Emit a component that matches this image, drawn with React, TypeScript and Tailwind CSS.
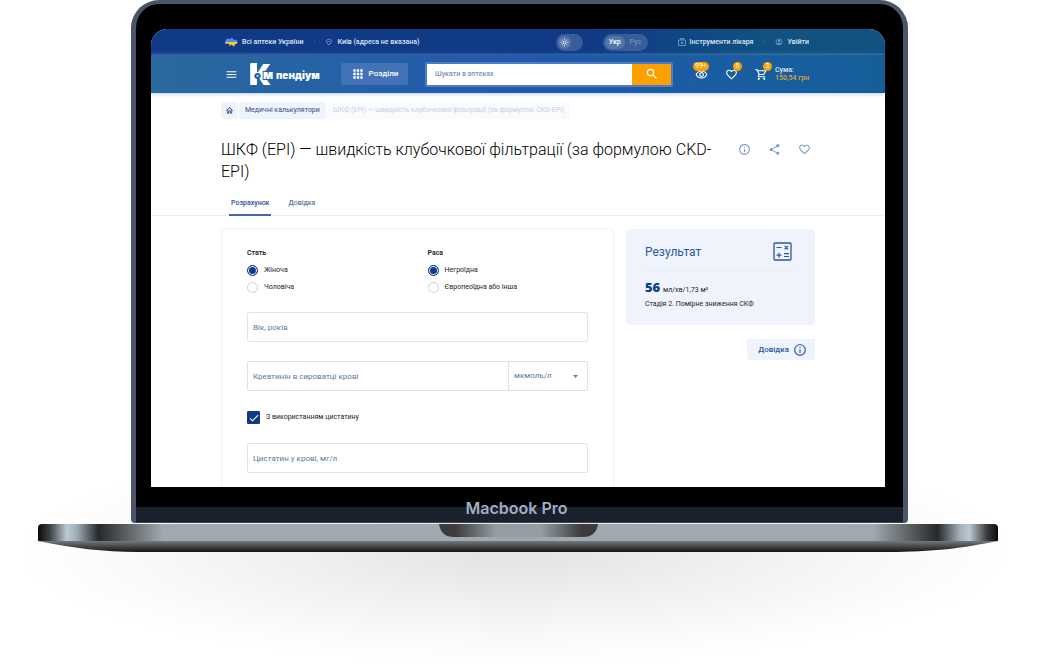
import { useState } from 'react';
import type { ReactNode } from 'react';
import {
  MdApps,
  MdCheck,
  MdFavoriteBorder,
  MdInfoOutline,
  MdMenu,
  MdOutlineAccountCircle,
  MdOutlineHome,
  MdOutlineLightMode,
  MdOutlinePlace,
  MdOutlineRemoveRedEye,
  MdOutlineShoppingCart,
  MdSearch,
  MdShare,
} from 'react-icons/md';

function UkraineIcon() {
  return (
    <svg viewBox="0 0 26 18" className="w-[13px] h-[9px]" aria-hidden="true">
      <path d="M1 4l4-3 5 1 3-2 3 1 2 3 4-1 3 3v3H0l1-2z" fill="#4c8df0" />
      <path d="M0 8h25l-1 3-5 2 1 2-4 2-1-3-3-1-2 3-2-1 1-3-4-1-4 1z" fill="#ffc93c" />
    </svg>
  );
}

function MedkitIcon() {
  return (
    <svg viewBox="0 0 16 16" className="size-2 text-[#8db0cc]" fill="none" stroke="currentColor" strokeWidth="1.5" aria-hidden="true">
      <rect x="1" y="4" width="14" height="11" rx="1" />
      <path d="M5 4V1h6v3M8 7v5M5.500 9.500h5" />
    </svg>
  );
}

function CalculatorIcon() {
  return (
    <svg viewBox="0 0 19 19" className="size-[19px]" fill="none" stroke="#2c57a0" aria-hidden="true">
      <rect x="1" y="1" width="17" height="17" rx="1" strokeWidth="1.300" />
      <path d="M3.500 5.500h5M11.500 3.800l3.600 3.600M15.100 3.800l-3.600 3.600M3.500 13.200h5M6 10.700v5M11 11.700h5M11 14.500h5" strokeWidth="1.200" />
    </svg>
  );
}

function Logo() {
  return (
    <svg viewBox="0 0 72 24" className="w-[72px] h-6 overflow-visible" role="img" aria-label="Компендіум" fontFamily="Inter, sans-serif" fontWeight="900">
      <rect x="0.500" y="1" width="6.500" height="21.500" fill="#fff" />
      <text x="-1" y="22.500" fontSize="29" fill="#fff">К</text>
      <text x="4" y="17" fontSize="11" fill="#2560a8">о</text>
      <text x="13" y="17" fontSize="12" fill="#fff" stroke="#2560a8" strokeWidth="2" paintOrder="stroke">м</text>
      <text x="26" y="17" fontSize="10" fill="#fff">пендіум</text>
    </svg>
  );
}

function CounterLink({ label, count, children }: { label: string; count: string; children: ReactNode }) {
  const side = count.length > 1 ? '-left-0.5' : 'left-2';
  return (
    <a href="#" aria-label={label} className="relative text-white text-[13px]">
      {children}
      <span className={`absolute -top-1.5 ${side} h-[9px] min-w-[9px] px-0.5 rounded-full bg-[#fca000] text-[7px] leading-[9px] text-center`}>
        {count}
      </span>
    </a>
  );
}

function TopBar() {
  const [lang, setLang] = useState('Укр');

  return (
    <div className="h-[26px] pl-[74px] pr-[76px] flex items-center bg-linear-to-r from-[#103a86] from-60% to-[#115282] to-85% text-[7px] font-medium text-[#dce6f5]">
      <a href="#" className="flex items-center gap-1">
        <UkraineIcon />
        Всі аптеки України
      </a>
      <span className="mx-2.5 text-[#6d8dbb]">·</span>
      <a href="#" className="flex items-center gap-1">
        <MdOutlinePlace className="size-2 text-[#9fb4d6]" />
        Київ (адреса не вказана)
      </a>
      <button aria-label="Тема" className="ml-auto w-[27px] h-[17px] p-0.5 rounded-full bg-[#375d9b] text-white">
        <span className="flex items-center justify-center size-[13px] rounded-full bg-[#5576ab]">
          <MdOutlineLightMode className="size-[9px]" />
        </span>
      </button>
      <div className="ml-5 mr-[30px] h-[17px] w-[45px] p-0.5 flex rounded-full bg-[#375d9b]">
        {['Укр', 'Рус'].map((item) => (
          <button
            key={item}
            onClick={() => setLang(item)}
            className={item === lang ? 'flex-1 rounded-full bg-[#5576ab] text-white' : 'flex-1 text-[#7390bd]'}
          >
            {item}
          </button>
        ))}
      </div>
      <a href="#" className="flex items-center gap-1">
        <MedkitIcon />
        Інструменти лікаря
      </a>
      <span className="mx-2.5 text-[#6d9dbb]">·</span>
      <a href="#" className="flex items-center gap-1">
        <MdOutlineAccountCircle className="size-2 text-[#8db0cc]" />
        Увійти
      </a>
    </div>
  );
}

function NavBar() {
  return (
    <div className="h-[38px] px-[74px] flex items-center bg-linear-to-r from-[#29699d] via-[#2159ae] to-[#145f98] shadow-[0_1px_4px_#b9cdea]">
      <button aria-label="Меню" className="text-white">
        <MdMenu className="size-[13px]" />
      </button>
      <a href="#" className="ml-3">
        <Logo />
      </a>
      <button className="ml-[19px] w-[67px] h-[22px] flex items-center justify-center gap-1 rounded-xs bg-[#4472b6] text-[8px] font-medium text-white">
        <MdApps className="size-[14px]" />
        Розділи
      </button>
      <form className="ml-[17px] flex-1 h-[25px] flex rounded-xs border-2 border-[#4d7dc0]" onSubmit={(e) => e.preventDefault()}>
        <input
          type="search"
          aria-label="Шукати в аптеках"
          placeholder="Шукати в аптеках"
          className="flex-1 min-w-0 px-2 bg-white text-[7px] font-medium placeholder:text-[#7896c0] outline-none"
        />
        <button aria-label="Знайти" className="w-[39px] flex items-center justify-center bg-[#fca000] text-white">
          <MdSearch className="size-[14px]" />
        </button>
      </form>
      <div className="ml-[22px] flex items-center gap-[17px]">
        <CounterLink label="Переглянуті" count="99+">
          <MdOutlineRemoveRedEye />
        </CounterLink>
        <CounterLink label="Обране" count="6">
          <MdFavoriteBorder />
        </CounterLink>
        <CounterLink label="Кошик" count="3">
          <MdOutlineShoppingCart />
        </CounterLink>
      </div>
      <p className="ml-[7px] w-9 text-[7px] leading-[8px] font-medium text-[#dce6f5] whitespace-nowrap">
        Сума:
        <br />
        <span className="text-[#e2a52b]">150,54 грн</span>
      </p>
    </div>
  );
}

function RadioGroup({ title, name, options }: { title: string; name: string; options: string[] }) {
  return (
    <fieldset>
      <legend className="h-3 text-[7px] leading-3 font-semibold">{title}</legend>
      <div className="mt-[3px]">
        {options.map((option, i) => (
          <label key={option} className="h-[17px] flex items-center gap-1.5 text-[7px]">
            <input
              type="radio"
              name={name}
              defaultChecked={i === 0}
              className="appearance-none size-[11px] rounded-full border border-[#c5d0e4] checked:border-[#103a86] checked:bg-[#103a86] checked:shadow-[inset_0_0_0_1px_white]"
            />
            {option}
          </label>
        ))}
      </div>
    </fieldset>
  );
}

const fieldClass =
  'h-[30px] px-[5px] border border-[#dce4f1] rounded-xs text-[8px] text-[#567aa3] placeholder:text-[#567aa3] outline-none';

function CalculatorForm() {
  return (
    <form className="flex-1 flex flex-col px-[25px] pt-[18px] pb-[14px] border border-b-0 border-[#edf1f8] rounded-t-md">
      <div className="grid grid-cols-2 gap-5">
        <RadioGroup title="Стать" name="sex" options={['Жіноча', 'Чоловіча']} />
        <RadioGroup title="Раса" name="race" options={['Негроїдна', 'Європеоїдна або інша']} />
      </div>
      <input aria-label="Вік, років" placeholder="Вік, років" className={`${fieldClass} mt-4`} />
      <div className="mt-[19px] flex">
        <input
          aria-label="Креатинін в сироватці крові"
          placeholder="Креатинін в сироватці крові"
          className={`${fieldClass} flex-1 min-w-0 rounded-r-none`}
        />
        <div className="w-20 -ml-px grid items-center">
          <select aria-label="Одиниці" className={`${fieldClass} appearance-none col-start-1 row-start-1`}>
            <option>мкмоль/л</option>
            <option>мг/дл</option>
          </select>
          <svg viewBox="0 0 10 6" className="col-start-1 row-start-1 justify-self-end mr-2.5 w-[5px] h-[3px] pointer-events-none">
            <path d="M0 0h10L5 6z" fill="#5d7fb0" />
          </svg>
        </div>
      </div>
      <label className="mt-5 flex items-center gap-1.5 text-[7px]">
        <span className="grid place-items-center size-[13px]">
          <input type="checkbox" defaultChecked className="peer appearance-none col-start-1 row-start-1 size-[13px] rounded-[1px] border border-[#103a86] checked:bg-[#103a86]" />
          <MdCheck className="col-start-1 row-start-1 size-3 text-white pointer-events-none" />
        </span>
        З використанням цистатину
      </label>
      <input aria-label="Цистатин у крові, мг/л" placeholder="Цистатин у крові, мг/л" className={`${fieldClass} mt-[19px]`} />
    </form>
  );
}

function Result() {
  return (
    <aside className="w-[189px] pt-px flex flex-col items-end">
      <section className="w-full h-24 px-[19px] pt-[13px] rounded-sm bg-[#eff4fc]">
        <div className="h-[29px] pr-1 flex items-start justify-between border-b border-[#e6ecf6]">
          <h2 className="text-[12px] leading-5 text-[#2c57a0]">Результат</h2>
          <CalculatorIcon />
        </div>
        <p className="mt-[7px] text-[7px] leading-[18px]">
          <strong className="mr-px font-['Noto_Sans'] text-[13px] font-black text-[#103f8c]">56</strong> мл/хв/1,73 м²
        </p>
        <p className="text-[7px] leading-[10px]">Стадія 2. Помірне зниження СКФ</p>
      </section>
      <button className="mt-[14px] h-[21px] px-2 w-[68px] flex items-center justify-end gap-1 rounded-xs bg-[#eff4fc] text-[8px] font-medium text-[#2c57a0]">
        Довідка
        <MdInfoOutline className="size-[14px]" />
      </button>
    </aside>
  );
}

function CalculatorPage() {
  return (
    <div className="overflow-hidden rounded-t-2xl bg-white font-[Roboto,sans-serif] text-[#1b1e24]">
      <header>
        <TopBar />
        <NavBar />
      </header>
      <nav className="px-[70px] pt-[9px] flex gap-px text-[7px] leading-[17px] text-[#2f4d7c]">
        <a href="#" aria-label="Головна" className="w-[17px] flex items-center justify-center rounded-xs bg-[#eff4fc]">
          <MdOutlineHome className="size-[9px] text-[#103a86]" />
        </a>
        <a href="#" className="px-1.5 rounded-xs bg-[#eff4fc]">Медичні калькулятори</a>
        <span className="px-1.5 rounded-xs bg-[#fafbfe] text-[#c5d0e0]">
          ШКФ (EPI) — швидкість клубочкової фільтрації (за формулою CKD-EPI)
        </span>
      </nav>
      <div className="mt-5 px-[70px] flex items-start gap-5">
        <h1 className="flex-1 text-[16px] leading-[22px] font-light text-black">
          ШКФ (EPI) — швидкість клубочкової фільтрації (за формулою CKD-EPI)
        </h1>
        <div className="h-5 pr-1 flex items-center gap-[17px] text-[13px] text-[#7f9cca]">
          <button aria-label="Інформація"><MdInfoOutline /></button>
          <button aria-label="Поділитися"><MdShare /></button>
          <button aria-label="В обране"><MdFavoriteBorder /></button>
        </div>
      </div>
      <div className="mt-[7px] h-[26px] px-[78px] flex gap-[15px] border-b border-[#e9eef8] text-[7px] font-medium">
        <button className="h-[26px] px-0.5 pt-0.5 border-b-2 border-[#3f68ad] text-[#1f4f9e]">Розрахунок</button>
        <button className="h-[26px] px-0.5 text-[#567aa3]">Довідка</button>
      </div>
      <div className="mt-3 px-[70px] flex items-start gap-3">
        <CalculatorForm />
        <Result />
      </div>
    </div>
  );
}

function LaptopBase() {
  return (
    <svg viewBox="0 0 960 29" preserveAspectRatio="none" className="block w-full h-[29px]" aria-hidden="true">
      <defs>
        <linearGradient id="edge">
          <stop offset="0" stopColor="#08090b" />
          <stop offset=".012" stopColor="#3c4043" />
          <stop offset=".03" stopColor="#bdc9d2" />
          <stop offset=".04" stopColor="#a3afb8" />
          <stop offset=".063" stopColor="#26282a" />
          <stop offset=".08" stopColor="#46494b" />
          <stop offset=".13" stopColor="#a0a9af" />
          <stop offset=".87" stopColor="#a0a9af" />
          <stop offset=".92" stopColor="#46494b" />
          <stop offset=".937" stopColor="#26282a" />
          <stop offset=".96" stopColor="#a3afb8" />
          <stop offset=".97" stopColor="#bdc9d2" />
          <stop offset=".988" stopColor="#3c4043" />
          <stop offset="1" stopColor="#08090b" />
        </linearGradient>
        <linearGradient id="under" x2="0" y2="1">
          <stop offset="0" stopColor="#74797d" />
          <stop offset="1" stopColor="#151417" />
        </linearGradient>
        <linearGradient id="notch">
          <stop offset=".1" stopColor="#3b3b3b" />
          <stop offset=".36" stopColor="#939ea4" />
          <stop offset=".64" stopColor="#939ea4" />
          <stop offset=".9" stopColor="#3b3b3b" />
        </linearGradient>
      </defs>
      <path d="M0 18H960C925 25 895 29 850 29H100C65 29 35 25 0 18z" fill="url(#under)" />
      <path d="M0 18V5Q0 1 4 1H956Q960 1 960 5V18z" fill="url(#edge)" />
      <path d="M401 1H560Q558 14 545 14H416Q403 14 401 1z" fill="url(#notch)" />
    </svg>
  );
}

function App() {
  return (
    <main className="min-h-screen pl-[38px] pr-[52px] bg-white bg-[radial-gradient(ellipse_47%_17%_at_49%_83%,#e2e2e2,#f0f0f0_45%,#fafafa_80%,#ffffff)]">
      <div className="ml-[93px] mr-[90px] overflow-hidden rounded-t-[28px] rounded-b-sm border-[5px] border-t-4 border-b-0 border-[#4a5568] bg-black">
        <div className="pl-[15px] pr-[18px] pt-[25px]">
          <CalculatorPage />
        </div>
        <div className="h-9 pt-1.5 pr-1.5 flex items-center justify-center bg-linear-to-b from-black from-58% to-[#1a202c] to-58% border-b border-[#3a4352] font-[Inter,sans-serif] text-[16px] font-semibold text-[#a0aec0]">
          Macbook Pro
        </div>
      </div>
      <LaptopBase />
    </main>
  );
}

export default App;
